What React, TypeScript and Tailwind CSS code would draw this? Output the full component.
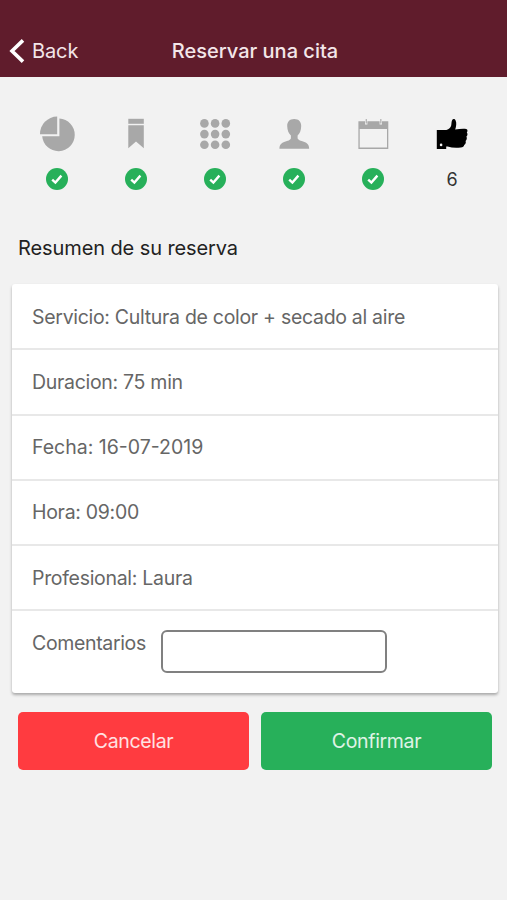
import type { ReactNode } from "react";
import clsx from "clsx";

const DOTS = [7.4, 18.1, 28.8];

const STEPS: { name: string; icon: ReactNode }[] = [
  {
    name: "pie",
    icon: (
      <>
        <path d="M18.2 18.2H1A17.2 17.2 0 0 1 18.2.6Z" />
        <path d="M20.4 2.6A16.3 16.3 0 1 1 3.2 20.2H20.4Z" />
      </>
    ),
  },
  {
    name: "bookmark",
    icon: (
      <>
        <path d="M10.3 2.8H25.8V7.8H10.3Z" />
        <path d="M10.3 9.2H25.8V32.3L18 25.4L10.3 32.3Z" />
      </>
    ),
  },
  {
    name: "grid",
    icon: DOTS.map((cy) =>
      DOTS.map((cx) => <circle key={`${cx}-${cy}`} cx={cx} cy={cy} r="4.3" />)
    ),
  },
  {
    name: "person",
    icon: (
      <path d="M18.2 3C22.8 3 25.3 5.8 25.2 10C25.1 14.4 23.8 17.6 21.6 19.6V22.6C22.4 24.4 24.8 24.8 27.8 25.8C31.4 27 33 28.6 33.2 32.8H3.4C3.6 28.6 5.2 27 8.8 25.8C11.8 24.8 14.2 24.4 14.9 22.6V19.6C12.7 17.6 11.3 14.4 11.2 10C11.1 5.8 13.6 3 18.2 3Z" />
    ),
  },
  {
    name: "calendar",
    icon: (
      <>
        <path
          fillRule="evenodd"
          d="M3.4 5.2H10V8.6H12.4V5.2H24.6V8.6H27V5.2H33.3V33H3.4ZM4.7 13.1V31.6H32V13.1Z"
        />
        <path d="M10.7 3H11.8V7.6H10.7ZM25.3 3H26.4V7.6H25.3Z" />
      </>
    ),
  },
  {
    name: "thumb",
    icon: (
      <path
        fillRule="evenodd"
        d="M2.8 14H12.4C15 13 16.6 11.6 17.2 9.4C17.6 7.4 17.4 5.6 18.2 4C19 2.6 20.8 2.8 21.6 4.4C22.8 7 22.2 10.2 21.2 13.6C25 13 29 12.6 32.2 13C33.8 13.4 33.8 15.4 32.8 16.4C33.9 17.6 33.6 19.6 32.4 20.6C33.2 22 32.9 24 31.6 25C32.2 26.6 31.6 28.2 30.2 29C30 30.4 28.8 31.2 26.8 31.5C22 32.2 17.6 31.8 13.6 30.6H12.2V33H2.8ZM7.1 27.6A1.3 1.3 0 1 0 7.1 30.2A1.3 1.3 0 1 0 7.1 27.6Z"
      />
    ),
  },
];

const DETAILS = [
  { text: "Servicio: Cultura de color + secado al aire", tracking: "tracking-[-0.3px]" },
  { text: "Duracion: 75 min", tracking: "tracking-[-0.3px]" },
  { text: "Fecha: 16-07-2019", tracking: "tracking-normal" },
  { text: "Hora: 09:00", tracking: "tracking-[-0.3px]" },
  { text: "Profesional: Laura", tracking: "tracking-[-0.3px]" },
];

function Header() {
  return (
    <header className="grid h-[77px] grid-cols-[1fr_auto_1fr] items-end bg-[#601c2c] pr-[6px] pb-[11px] pl-[9px] text-[20px] leading-[30px] text-[#f3e6e9]">
      <button className="flex items-center gap-[7px] text-left tracking-[-0.1px]">
        <svg width="16" height="26" viewBox="0 0 16 26" fill="none" stroke="#fff" strokeWidth="3.6">
          <path d="M14 2.4L3 13L14 23.6" />
        </svg>
        Back
      </button>
      <h1 className="font-medium">Reservar una cita</h1>
    </header>
  );
}

function Steps() {
  return (
    <div className="mt-[39px] grid grid-cols-6 pr-[15.5px] pl-[17.5px]">
      {STEPS.map((step, i) => {
        const current = i === STEPS.length - 1;
        return (
          <div key={step.name} className="flex flex-col items-center gap-[15px]">
            <svg
              width="36"
              height="36"
              viewBox="0 0 36 36"
              className={current ? "fill-black" : "fill-[#a8a8a8]"}
            >
              {step.icon}
            </svg>
            {current ? (
              <span className="text-[18px] leading-[26px] text-[#333]">{i + 1}</span>
            ) : (
              <svg className="mt-px" width="22" height="22" viewBox="0 0 22 22">
                <circle cx="11" cy="11" r="11" fill="#27b05a" />
                <path d="M6.2 11.6L9.4 14.6L15.4 7.6" fill="none" stroke="#fff" strokeWidth="2.4" />
              </svg>
            )}
          </div>
        );
      })}
    </div>
  );
}

export default function App() {
  return (
    <div className="min-h-screen bg-[#f2f2f2] font-['Inter','Liberation_Sans',sans-serif]">
      <Header />
      <Steps />
      <h2 className="mt-10 pl-[18px] text-[20px] leading-[30px] tracking-[-0.1px] text-[#222]">
        Resumen de su reserva
      </h2>
      <section className="mx-3 mr-[9px] mt-[21px] rounded-[3px] bg-white pt-px text-[19.5px] text-[#666] shadow-[0_2px_3px_rgba(0,0,0,0.3)]">
        {DETAILS.map(({ text, tracking }) => (
          <p
            key={text}
            className={clsx(
              "flex h-[65.3px] items-center border-b-2 border-[#e8e8e8] pt-px pl-5",
              tracking
            )}
          >
            {text}
          </p>
        ))}
        <label className="flex h-[82px] items-start pl-5">
          <span className="w-[129px] pt-[17px] leading-[30px] tracking-[-0.35px]">Comentarios</span>
          <input className="mt-[19px] h-[43px] w-[226px] rounded-[6px] border-2 border-[#808080] bg-white px-2 outline-none" />
        </label>
      </section>
      <div className="mt-[19px] grid grid-cols-2 gap-3 pr-[15px] pl-[18px] text-[19.5px] tracking-[-0.35px] text-white/85">
        <button className="h-[58px] rounded-[5px] bg-[#ff3b40]">Cancelar</button>
        <button className="h-[58px] rounded-[5px] bg-[#27b05a]">Confirmar</button>
      </div>
    </div>
  );
}
